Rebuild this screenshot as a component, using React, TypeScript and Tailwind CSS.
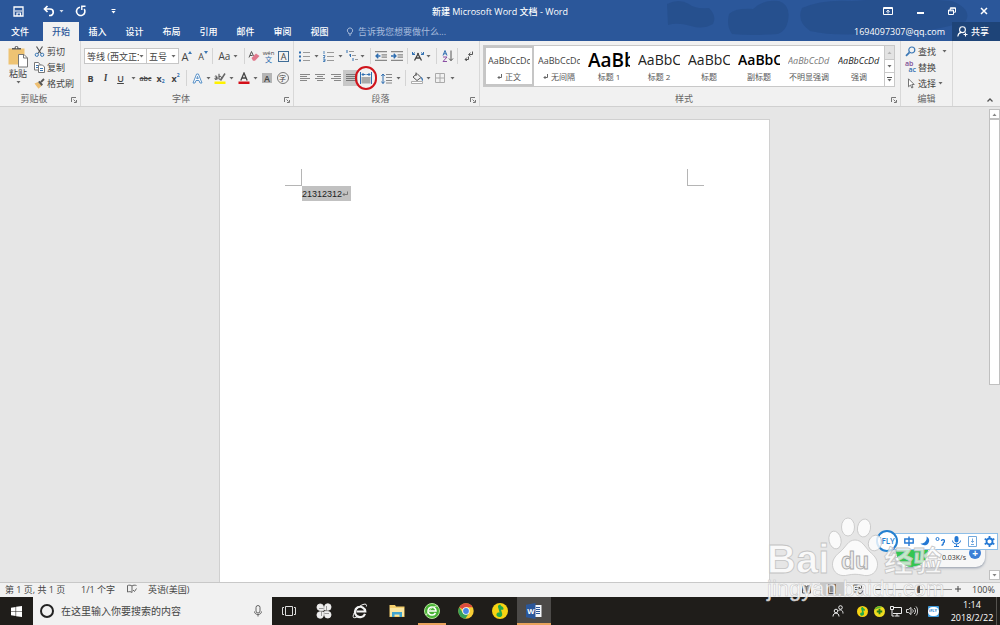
import type { ReactNode } from 'react';
import clsx from 'clsx';

const tabs = ['插入', '设计', '布局', '引用', '邮件', '审阅', '视图'];

const styleCells = [
  { name: '正文', preview: 'AaBbCcDd', mark: true, look: 'text-[9px] text-[#444]' },
  { name: '无间隔', preview: 'AaBbCcDd', mark: true, look: 'text-[9px] text-[#444]' },
  { name: '标题 1', preview: 'AaBb', look: 'text-[19px] font-semibold text-black' },
  { name: '标题 2', preview: 'AaBbC', look: 'text-[14px] text-[#222]' },
  { name: '标题', preview: 'AaBbC', look: 'text-[14px] text-[#222]' },
  { name: '副标题', preview: 'AaBbC', look: 'text-[14px] font-semibold text-black' },
  { name: '不明显强调', preview: 'AaBbCcDd', look: 'text-[9px] italic text-[#777]' },
  { name: '强调', preview: 'AaBbCcDd', look: 'text-[9px] italic text-[#222]' },
];

function Caret({ className }: { className?: string }) {
  return (
    <svg viewBox="0 0 5 3" className={clsx('h-[3px] w-[5px] shrink-0 opacity-80', className)} fill="currentColor" aria-hidden="true">
      <path d="M0.5 0h4L2.5 2.6z" />
    </svg>
  );
}

function Icon({ size = 'size-[14px]', box = 14, children }: { size?: string; box?: number; children: ReactNode }) {
  return (
    <svg viewBox={`0 0 ${box} ${box}`} className={clsx('shrink-0', size)} fill="none" aria-hidden="true">
      {children}
    </svg>
  );
}

function Tool({ label, w, children, className }: { label: string; w: string; children: ReactNode; className?: string }) {
  return (
    <button type="button" aria-label={label} className={clsx('flex h-4 shrink-0 items-center justify-center', w, className)}>
      {children}
    </button>
  );
}

function Drop({ label, w }: { label: string; w: string }) {
  return (
    <Tool label={label} w={w}>
      <Caret />
    </Tool>
  );
}

function Sep({ w }: { w: string }) {
  return (
    <span className={clsx('flex h-4 shrink-0 justify-center', w)}>
      <span className="w-px bg-[#d4d4d4]" />
    </span>
  );
}

function Launcher({ label }: { label: string }) {
  return (
    <button type="button" aria-label={label} className="flex h-[14px] w-3 items-end justify-center pb-[3px]">
      <Icon size="size-[6px]" box={6}>
        <path d="M0.5 5V0.5H5M2.5 2.5l2 2M5.5 3v2.5H3" stroke="#777" />
      </Icon>
    </button>
  );
}

function Group({ title, w, launcher = true, children }: { title: string; w: string; launcher?: boolean; children: ReactNode }) {
  return (
    <section className={clsx('flex flex-col border-r border-[#d8d8d8]', w)} aria-label={title}>
      {children}
      <div className="mt-auto flex text-[#666]">
        <span className="flex-1 text-center leading-[14px]">{title}</span>
        {launcher && <Launcher label={`${title}设置`} />}
      </div>
    </section>
  );
}

function TitleBar() {
  return (
    <div className="flex h-[22px] items-center">
      <div className="flex flex-1 items-center">
        <Tool label="保存" w="w-[17px]" className="ml-[10px]">
          <Icon size="size-[11px]" box={11}>
            <path d="M1 1h9v9H1z" stroke="#fff" strokeWidth="1.3" />
            <path d="M2 5h7M4 10V7h3.500v3" stroke="#fff" strokeWidth="1.2" />
          </Icon>
        </Tool>
        <Tool label="撤消" w="w-4" className="ml-[14px]">
          <Icon size="size-3" box={12}>
            <path d="M4.500 1L1.500 4l3 3M2 4h5a3 3 0 0 1 0 6.500H6" stroke="#fff" strokeWidth="1.700" />
          </Icon>
        </Tool>
        <Drop label="撤消列表" w="w-2" />
        <Tool label="重复" w="w-4" className="ml-2">
          <Icon size="size-3" box={12}>
            <path d="M5 2.200A4.200 4.200 0 1 0 9.200 4" stroke="#fff" strokeWidth="1.600" />
            <path d="M10.500 1.200H6.800v3.800" stroke="#fff" strokeWidth="1.400" />
          </Icon>
        </Tool>
        <Tool label="自定义快速访问工具栏" w="w-4" className="ml-4">
          <Icon size="size-[5px]" box={5}>
            <path d="M0.5 0h4v1h-4zM0.5 2h4L2.5 4.5z" fill="#fff" />
          </Icon>
        </Tool>
      </div>
      <h1 className="text-[9px] font-medium">新建 Microsoft Word 文档 - Word</h1>
      <div className="flex flex-1 justify-end">
        <Tool label="功能区显示选项" w="w-8">
          <Icon size="size-[10px]" box={10}>
            <path d="M0.5 1.5h9v7h-9zM0.5 2.5h9M5 7.5V4.5M3.3 5.8L5 4.2l1.7 1.6" stroke="#fff" />
          </Icon>
        </Tool>
        <Tool label="最小化" w="w-8">
          <span className="mt-1 h-[2px] w-[7px] bg-white" />
        </Tool>
        <Tool label="向下还原" w="w-8">
          <Icon size="size-[8px]" box={8}>
            <path d="M0.5 3h5v4.5h-5zM0.5 3.8h5M2.3 3V0.8h5.2v4.4H5.5M2.3 1.3h5.2" stroke="#fff" />
          </Icon>
        </Tool>
        <Tool label="关闭" w="w-8">
          <Icon size="size-[8px]" box={8}>
            <path d="M1 1l6 6M7 1L1 7" stroke="#fff" strokeWidth="1.5" />
          </Icon>
        </Tool>
      </div>
    </div>
  );
}

function TabBar() {
  return (
    <nav className="flex h-[19px] items-stretch font-medium">
      <button type="button" className="w-[43px] pr-[3px]">文件</button>
      <button type="button" className="w-9 bg-[#f1f1f1] text-[#2b579a]">开始</button>
      {tabs.map((tab) => (
        <button key={tab} type="button" className="w-[37px]">{tab}</button>
      ))}
      <label className="ml-[8px] flex min-w-0 flex-1 items-center gap-1 font-normal text-[#a9bddd]">
        <Icon size="h-[11px] w-2" box={10}>
          <path d="M3.5 8V6.8A3.3 3.3 0 1 1 6.5 6.8V8zM3.8 9.5h2.4" stroke="#c3d0e6" />
        </Icon>
        <input className="w-[120px] bg-transparent placeholder:text-[#a9bddd]" placeholder="告诉我您想要做什么..." aria-label="告诉我您想要做什么" />
      </label>
      <a href="#account" className="mr-[7px] flex items-center font-normal">1694097307@qq.com</a>
      <button type="button" className="flex w-12 items-center gap-[3px] bg-[#1e4478] pl-[5px]">
        <Icon size="size-[11px]" box={11}>
          <circle cx="5.5" cy="3.7" r="2.9" stroke="#fff" strokeWidth="1.1" />
          <path d="M0.8 10.5C1 8 2.5 6.8 4.2 6.4M8.5 6.5v4M6.5 8.5h4" stroke="#fff" strokeWidth="1.1" />
        </Icon>
        共享
      </button>
    </nav>
  );
}

function Clipboard() {
  return (
    <Group title="剪贴板" w="w-[81px]">
      <div className="flex pb-px pt-[2px]">
        <button type="button" className="flex w-[34px] flex-col items-center pl-[2px] pt-[2px]">
          <svg viewBox="0 0 20 23" className="h-[23px] w-5" fill="none" aria-hidden="true">
            <path d="M0.5 3.5h16v16h-16z" fill="#eec373" />
            <path d="M4 4.5h9V3h-2.5a2 2 0 0 0-4 0H4z" fill="#5c5c5c" />
            <circle cx="8.5" cy="2.6" r="0.8" fill="#fff" />
            <path d="M10.5 9.5h5.5l3.5 3.5v9h-9z" fill="#fff" stroke="#777" />
            <path d="M15.5 9.5V13h4" stroke="#777" />
          </svg>
          <span className="leading-[11px]">粘贴</span>
          <Caret className="mt-[2px]" />
        </button>
        <div className="flex flex-col">
          <button type="button" className="flex h-4 items-center gap-[2px]">
            <Icon size="size-[11px]" box={11}>
              <path d="M2.5 0.5l4.5 7M8.5 0.5L4 7.5" stroke="#555" strokeWidth="1.2" />
              <circle cx="2.8" cy="8.8" r="1.6" stroke="#3b78b5" />
              <circle cx="8.2" cy="8.8" r="1.6" stroke="#3b78b5" />
            </Icon>
            剪切
          </button>
          <button type="button" className="flex h-4 items-center gap-[2px]">
            <Icon size="size-[11px]" box={11}>
              <path d="M0.5 0.5h4l1.5 2v5.5H0.5z" fill="#fff" stroke="#777" />
              <path d="M4.5 3h4l2 2v5.5h-6z" fill="#fff" stroke="#777" />
              <path d="M2 3.5h2M2 5.5h2M6 6.5h3M6 8.5h3" stroke="#3b78b5" />
            </Icon>
            复制
          </button>
          <button type="button" className="flex h-4 items-center gap-[2px]">
            <Icon size="size-[11px]" box={11}>
              <path d="M0.5 5.5L4 4l3.5 4-3 2.8z" fill="#eebf72" />
              <path d="M4 4l1.8-1.2L9 6.5 7.5 8z" fill="#555" />
              <path d="M7 4l3-3" stroke="#555" strokeWidth="1.8" />
            </Icon>
            格式刷
          </button>
        </div>
      </div>
    </Group>
  );
}

function FontGroup() {
  return (
    <Group title="字体" w="w-[213px]">
      <div className="mt-[7px] flex pl-[3px]">
        <span className="flex h-4 w-[63px] items-center border border-[#c6c6c6] bg-white pl-[2px] pr-[2px]">
          <select aria-label="字体名称" className="min-w-0 flex-1 appearance-none overflow-hidden text-clip">
            <option>等线 (西文正文)</option>
          </select>
          <Caret />
        </span>
        <span className="-ml-px flex h-4 w-[33px] items-center border border-[#c6c6c6] bg-white pl-[2px] pr-[2px]">
          <select aria-label="字号" className="min-w-0 flex-1 appearance-none">
            <option>五号</option>
          </select>
          <Caret />
        </span>
        <Tool label="增大字号" w="w-4">
          <span className="text-[11px]">A</span>
          <span className="mb-2 size-0 border-x-2 border-b-[3px] border-x-transparent border-b-[#3b78b5]" />
        </Tool>
        <Tool label="减小字号" w="w-4">
          <span className="text-[9px]">A</span>
          <span className="mb-2 size-0 border-x-2 border-t-[3px] border-x-transparent border-t-[#3b78b5]" />
        </Tool>
        <Sep w="w-[3px]" />
        <Tool label="更改大小写" w="w-[29px]" className="gap-[3px] text-[10px]">
          Aa
          <Caret />
        </Tool>
        <Sep w="w-[3px]" />
        <Tool label="清除所有格式" w="w-[15px]">
          <Icon size="size-3" box={12}>
            <path d="M1 7.5L3.5 1.5 5.5 6M2 5.5h2.5" stroke="#555" />
            <path d="M3.5 8L8 3.5l3.5 2.5L7 10.8H5z" fill="#e0788c" />
          </Icon>
        </Tool>
        <Tool label="拼音指南" w="w-[15px]" className="flex-col">
          <span className="text-[6px] leading-[6px]">wén</span>
          <span className="text-[7px] leading-[7px] text-[#2f6eb0]">文</span>
        </Tool>
        <Tool label="字符边框" w="w-[15px]">
          <span className="flex size-[11px] items-center justify-center border border-[#3f6d97] text-[9px]">A</span>
        </Tool>
      </div>
      <div className="mt-[6px] flex pl-[2px]">
        <Tool label="加粗" w="w-[15px]" className="font-bold">B</Tool>
        <Tool label="倾斜" w="w-[15px]" className="font-serif italic font-bold">I</Tool>
        <Tool label="下划线" w="w-[15px]" className="font-semibold underline">U</Tool>
        <Drop label="下划线列表" w="w-[10px]" />
        <Tool label="删除线" w="w-[15px]" className="text-[7px] font-semibold line-through">abc</Tool>
        <Tool label="下标" w="w-[15px]" className="font-bold">
          x<span className="mt-[6px] text-[5px] text-[#2f6eb0]">2</span>
        </Tool>
        <Tool label="上标" w="w-[15px]" className="font-bold">
          x<span className="mb-[5px] text-[5px] text-[#2f6eb0]">2</span>
        </Tool>
        <Sep w="w-[7px]" />
        <Tool label="文本效果和版式" w="w-[14px]">
          <Icon size="size-[11px]" box={11}>
            <path d="M1 10L4.6 1h1.8L10 10H8L7 7.5H4L3 10zM4.7 5.6h1.6L5.5 3.4z" fill="#fff" stroke="#5b93c9" />
          </Icon>
        </Tool>
        <Drop label="文本效果列表" w="w-2" />
        <Tool label="突出显示颜色" w="w-4">
          <Icon size="size-3" box={12}>
            <path d="M0.8 4.5c.8-.8 2.2-.6 2.2.5v2.5M3 5.7c-2.5 0-2.6 1.8-1.3 1.8.8 0 1.3-.6 1.3-1M5 1.8v5.5M5 5c.4-1 2.5-1 2.5.8S5.5 8 5 6.8" stroke="#444" />
            <path d="M6.5 8.5l4.5-7" stroke="#666" strokeWidth="1.5" />
            <path d="M0.5 9.5h11V12h-11z" fill="#fff200" />
          </Icon>
        </Tool>
        <Drop label="突出显示颜色列表" w="w-[7px]" />
        <Tool label="字体颜色" w="w-[17px]">
          <Icon size="size-3" box={12}>
            <path d="M2.8 8.5L6 1l3.2 7.5M4 6h4" stroke="#444" strokeWidth="1.3" />
            <path d="M0.5 9.5h11V12h-11z" fill="#d40f18" />
          </Icon>
        </Tool>
        <Drop label="字体颜色列表" w="w-[7px]" />
        <Tool label="字符底纹" w="w-4">
          <span className="flex size-[10px] items-center justify-center bg-[#b5b5b5] font-semibold">A</span>
        </Tool>
        <Tool label="带圈字符" w="w-[15px]">
          <span className="flex size-[12px] items-center justify-center rounded-full border border-[#777] text-[7px]">字</span>
        </Tool>
      </div>
    </Group>
  );
}

function Paragraph() {
  return (
    <Group title="段落" w="w-[186px]">
      <div className="mt-[7px] flex pl-[3px]">
        <Tool label="项目符号" w="w-[15px]">
          <Icon size="size-[11px]" box={11}>
            <path d="M4 1.5h7M4 5.5h7M4 9.5h7" stroke="#999" />
            <path d="M0 0.5h2v2H0zM0 4.5h2v2H0zM0 8.5h2v2H0z" fill="#2f6eb0" />
          </Icon>
        </Tool>
        <Drop label="项目符号列表" w="w-2" />
        <Tool label="编号" w="w-4">
          <Icon size="size-[11px]" box={11}>
            <path d="M4 1.5h7M4 5.5h7M4 9.5h7" stroke="#999" />
            <path d="M1 0v3M0 4.5h2v1L0.5 6.5H2M0 8h2v2.5H0M0.5 9.3H2" stroke="#2f6eb0" strokeWidth="0.8" />
          </Icon>
        </Tool>
        <Drop label="编号列表" w="w-2" />
        <Tool label="多级列表" w="w-[15px]">
          <Icon size="size-3" box={12}>
            <path d="M3 1.5h5M6 5.5h4M9 9.5h3" stroke="#999" />
            <path d="M1 0v3M3 5h2M4.5 4v3M7 8v3" stroke="#2f6eb0" />
          </Icon>
        </Tool>
        <Drop label="多级列表样式" w="w-[7px]" />
        <Sep w="w-2" />
        <Tool label="减少缩进量" w="w-[14px]">
          <Icon size="size-3" box={11}>
            <path d="M0 1.5h11M6 4.5h5M6 6.5h5M0 9.5h11" stroke="#888" />
            <path d="M5 5.5H1M3 3.5l-2 2 2 2" stroke="#2f6eb0" strokeWidth="1.3" />
          </Icon>
        </Tool>
        <Tool label="增加缩进量" w="w-[17px]">
          <Icon size="size-3" box={11}>
            <path d="M0 1.5h11M6 4.5h5M6 6.5h5M0 9.5h11" stroke="#888" />
            <path d="M0 5.5h4M2.5 3.5l2 2-2 2" stroke="#2f6eb0" strokeWidth="1.3" />
          </Icon>
        </Tool>
        <Sep w="w-[5px]" />
        <Tool label="中文版式" w="w-4">
          <Icon size="size-3" box={12}>
            <path d="M2.5 10.5L6.500 3M5.500 3l4 7.500M4 8h4" stroke="#444" strokeWidth="1.3" />
            <path d="M0.5 4.5l2.500-2M0.5 2v2.5h2.5M11.5 4.5L9 2.500M11.5 2v2.5H9" stroke="#2f6eb0" />
          </Icon>
        </Tool>
        <Drop label="中文版式列表" w="w-[5px]" />
        <Sep w="w-[10px]" />
        <Tool label="排序" w="w-[13px]">
          <Icon size="size-3" box={12}>
            <path d="M1 5.5L3 0.5l2 5M1.8 3.8h2.4" stroke="#2f6eb0" />
            <path d="M1 7h4L1 11.5h4" stroke="#8a4fa3" />
            <path d="M9 0.5v10M7 8.5l2 2.2 2-2.2" stroke="#555" />
          </Icon>
        </Tool>
        <Sep w="w-[7px]" />
        <Tool label="显示编辑标记" w="w-4">
          <Icon size="size-[10px]" box={10}>
            <path d="M8.5 0.5v3H5M6.5 1.8L4.5 3.5l2 1.8M4.5 5.5v3H1M3 6.5L1 8.5l2 1.5" stroke="#555" />
          </Icon>
        </Tool>
      </div>
      <div className="mt-[6px] flex pl-[3px]">
        <Tool label="左对齐" w="w-[15px]">
          <Icon size="size-[10px]" box={10}>
            <path d="M0 1.5h10M0 3.5h7M0 5.5h10M0 7.5h7" stroke="#888" />
          </Icon>
        </Tool>
        <Tool label="居中" w="w-4">
          <Icon size="size-[10px]" box={10}>
            <path d="M0 1.5h10M2 3.5h6M0 5.5h10M2 7.5h6" stroke="#888" />
          </Icon>
        </Tool>
        <Tool label="右对齐" w="w-[15px]">
          <Icon size="size-[10px]" box={10}>
            <path d="M0 1.5h10M3 3.5h7M0 5.5h10M3 7.5h7" stroke="#888" />
          </Icon>
        </Tool>
        <Tool label="两端对齐" w="w-[15px]" className="bg-[#c8c8c8]">
          <Icon size="size-[10px]" box={10}>
            <path d="M0 1.5h10M0 3.5h10M0 5.5h10M0 7.5h10" stroke="#777" />
          </Icon>
        </Tool>
        <span className="relative">
          <Tool label="分散对齐" w="w-4">
            <Icon size="size-3" box={12}>
              <path d="M0.5 0v12M11.5 0v12" stroke="#2f6eb0" />
              <path d="M2 2.5h3.5M6.5 2.5H10M3.5 1L2 2.5 3.5 4M8.5 1L10 2.5 8.5 4" stroke="#2f6eb0" />
              <path d="M1.5 5h9v6.5h-9z" fill="#a9a9a9" />
            </Icon>
          </Tool>
          <span className="pointer-events-none absolute -inset-x-[3px] -inset-y-1 rounded-full border-2 border-[#d0141c]" />
        </span>
        <Tool label="行和段落间距" w="w-[17px]" className="ml-1">
          <Icon size="size-[11px]" box={11}>
            <path d="M5 1.5h6M5 4.5h6M5 7.5h6M5 10h6" stroke="#888" />
            <path d="M2 1v9.5M0.3 3L2 1l1.7 2M0.3 8.5l1.7 2 1.7-2" stroke="#2f6eb0" />
          </Icon>
        </Tool>
        <Drop label="行距列表" w="w-[6px]" />
        <Sep w="w-2" />
        <Tool label="底纹" w="w-4">
          <Icon size="size-3" box={12}>
            <path d="M2 5l4-3.5 4 4L6 8.5zM5 4V0.5" stroke="#555" />
            <path d="M10 5.5c1.5 1 1.5 2.5 1 3" stroke="#2f6eb0" strokeWidth="1.3" />
            <path d="M0.5 9.5h11v2h-11z" fill="#fff" stroke="#999" strokeWidth="0.8" />
          </Icon>
        </Tool>
        <Drop label="底纹列表" w="w-[7px]" />
        <Tool label="边框" w="w-4">
          <Icon size="size-[10px]" box={10}>
            <path d="M0.5 0.5h9v9h-9zM5 0.5v9M0.5 5h9" stroke="#aaa" />
          </Icon>
        </Tool>
        <Drop label="边框列表" w="w-2" />
      </div>
    </Group>
  );
}

function StylesGroup() {
  return (
    <Group title="样式" w="min-w-0 flex-1">
      <div className="ml-[3px] mr-[5px] mt-1 flex h-[42px] overflow-hidden border border-[#c8c8c8] bg-white">
        {styleCells.map((cell, i) => (
          <button
            key={cell.name}
            type="button"
            className={clsx('flex w-[50px] shrink-0 flex-col border-2 px-[2px]', i === 0 ? 'border-[#c6c6c6]' : 'border-transparent')}
          >
            <span className={clsx('flex h-6 w-full items-center overflow-hidden whitespace-nowrap', cell.look)}>{cell.preview}</span>
            <span className="flex w-full items-center justify-center gap-[3px] whitespace-nowrap text-[8px] leading-[9px] text-[#555]">
              {cell.mark && (
                <Icon size="size-[5px]" box={5}>
                  <path d="M4.5 0v3.5H1M2.5 2L1 3.5 2.5 5" stroke="#666" />
                </Icon>
              )}
              {cell.name}
            </span>
          </button>
        ))}
        <div className="ml-auto flex w-[11px] flex-col divide-y divide-[#c8c8c8] border-l border-[#c8c8c8]">
          <button type="button" aria-label="上一行" className="flex flex-1 items-center justify-center bg-[#e3e3e3] text-[#aaa]">
            <Caret className="rotate-180" />
          </button>
          <button type="button" aria-label="下一行" className="flex flex-1 items-center justify-center">
            <Caret />
          </button>
          <button type="button" aria-label="其他样式" className="flex flex-1 flex-col items-center justify-center gap-px">
            <span className="h-px w-[5px] bg-[#555]" />
            <Caret />
          </button>
        </div>
      </div>
    </Group>
  );
}

function Editing() {
  return (
    <Group title="编辑" w="w-[52px]" launcher={false}>
      <div className="flex flex-col pl-1 pt-[2px]">
        <button type="button" className="flex h-4 items-center gap-[2px]">
          <Icon size="size-[11px]" box={11}>
            <circle cx="6.8" cy="4" r="3" stroke="#3b78b5" strokeWidth="1.2" />
            <path d="M4.5 6.3L1 9.8" stroke="#3b78b5" strokeWidth="1.8" />
          </Icon>
          查找
          <Caret className="ml-1" />
        </button>
        <button type="button" className="flex h-4 items-center gap-[2px]">
          <span className="flex w-[11px] flex-col text-[7px] font-semibold leading-[6px]">
            <span className="text-left text-[#7d4a94]">ab</span>
            <span className="text-right text-[#2f6eb0]">ac</span>
          </span>
          替换
        </button>
        <button type="button" className="flex h-4 items-center gap-[2px]">
          <Icon size="size-[11px]" box={11}>
            <path d="M3.5 0.8v8l2-1.8 1.3 3 1.2-.6L6.8 6.5h2.4z" fill="#fff" stroke="#666" strokeWidth="0.9" />
          </Icon>
          选择
          <Caret />
        </button>
      </div>
    </Group>
  );
}

function Ribbon() {
  return (
    <div className="flex border-b border-[#d0d0d0] bg-[#f1f1f1] text-[#444]">
      <Clipboard />
      <FontGroup />
      <Paragraph />
      <StylesGroup />
      <Editing />
      <div className="flex w-[47px] items-end justify-end pb-[3px] pr-[7px]">
        <button type="button" aria-label="折叠功能区">
          <Icon size="size-[6px]" box={6}>
            <path d="M0.5 4.5L3 2l2.5 2.5" stroke="#555" strokeWidth="1.3" />
          </Icon>
        </button>
      </div>
    </div>
  );
}

function Workspace() {
  return (
    <main className="flex min-h-0 flex-1 bg-[#e6e6e6]">
      <div className="flex min-w-0 flex-1 justify-center pt-3">
        <article className="flex w-[551px] items-start justify-between border border-b-0 border-[#d0d0d0] bg-white px-[65px] pt-[49px]">
          <div>
            <div className="h-[17px] w-[17px] border-b border-r border-[#b5b5b5]" />
            <p className="ml-[17px] flex h-[15px] items-center bg-[#c1c1c1] pr-[3px] pt-px font-['Liberation_Sans',sans-serif] text-[9px] text-[#222]">
              21312312
              <Icon size="size-[6px]" box={6}>
                <path d="M5.5 0.5v3H1M2.5 2L1 3.5 2.5 5" stroke="#666" strokeWidth="0.8" />
              </Icon>
            </p>
          </div>
          <div className="h-[17px] w-[17px] border-b border-l border-[#b5b5b5]" />
        </article>
      </div>
      <div className="flex w-[11px] flex-col pb-[2px] pt-[2px]">
        <button type="button" aria-label="向上滚动" className="flex h-[10px] items-center justify-center border border-[#c0c0c0] bg-white text-[#666]">
          <Caret className="rotate-180" />
        </button>
        <div className="h-[266px] border border-[#c0c0c0] bg-white" />
        <button type="button" aria-label="向下滚动" className="mt-auto flex h-[10px] items-center justify-center border border-[#c0c0c0] bg-white text-[#666]">
          <Caret />
        </button>
      </div>
    </main>
  );
}

function StatusBar() {
  return (
    <footer className="flex h-[15px] items-center border-t border-[#c8c8c8] bg-[#f1f1f1] pb-[2px] pl-[5px] text-[#444]">
      <span className="w-[76px]">第 1 页, 共 1 页</span>
      <span className="w-[46px]">1/1 个字</span>
      <button type="button" aria-label="校对">
        <Icon size="size-[10px]" box={10}>
          <path d="M5 2v6.5M5 2C4 1 2 1 0.5 1.5v6.5C2 7.5 4 7.5 5 8.5M5 2c1-1 3-1 4.500-.5M6 6l1.5 1.5L9.5 4.5" stroke="#666" />
        </Icon>
      </button>
      <span className="ml-[11px]">英语(美国)</span>
      <div className="ml-auto flex items-center">
        <Tool label="阅读视图" w="w-7">
          <Icon size="size-[9px]" box={9}>
            <path d="M0.5 1h3.5v7H0.5zM5 1h3.5v7H5zM1.5 3h1.5M1.5 5h1.5M6 3h1.5M6 5h1.5" stroke="#555" />
          </Icon>
        </Tool>
        <span className="flex h-[13px] items-center bg-[#c8c8c8]">
          <Tool label="页面视图" w="w-6">
            <Icon size="size-[10px]" box={10}>
              <path d="M1.5 0.5h7v9h-7zM3 3h4M3 5h4M3 7h4" stroke="#555" />
            </Icon>
          </Tool>
        </span>
        <Tool label="Web 版式视图" w="w-7">
          <Icon size="size-[10px]" box={10}>
            <path d="M0.5 1h8v3M0.5 1v7H4M2 3.5h5M2 5.5h2" stroke="#555" />
            <circle cx="7" cy="7" r="2.5" stroke="#555" />
          </Icon>
        </Tool>
        <Tool label="缩小" w="w-3">
          <span className="h-px w-[6px] bg-[#444]" />
        </Tool>
        <input
          type="range"
          aria-label="显示比例"
          min={10}
          max={190}
          defaultValue={100}
          className="h-[10px] w-[68px] appearance-none bg-[linear-gradient(#999,#999)] bg-[length:100%_1px] bg-center bg-no-repeat [&::-webkit-slider-thumb]:h-[8px] [&::-webkit-slider-thumb]:w-[3px] [&::-webkit-slider-thumb]:appearance-none [&::-webkit-slider-thumb]:bg-[#555]"
        />
        <Tool label="放大" w="w-3">
          <Icon size="size-[6px]" box={6}>
            <path d="M3 0v6M0 3h6" stroke="#444" />
          </Icon>
        </Tool>
        <span className="w-9 pl-2">100%</span>
      </div>
    </footer>
  );
}

function MusicNote() {
  return (
    <>
      <circle cx="8" cy="8" r="8" fill="#f7d313" />
      <path d="M8.5 1.5c0 2 3.5 2 3 4.5-.3 1-1.5 1-2.500.7l1.2 4c.8 3-3.2 4.3-5 2.6C3.5 11.5 5 9 7.6 9.6L6 4c-.3-1.5 1-2.5 2.5-2.5z" fill="#22a94d" />
    </>
  );
}

function TaskBar() {
  return (
    <div className="flex h-7 items-stretch bg-[#1f1d1a] text-white">
      <button type="button" aria-label="开始" className="flex w-[33px] items-center justify-center">
        <Icon size="size-[11px]" box={12}>
          <path d="M0 1.8L5 1v4.7H0zM5.6 0.9L12 0v5.7H5.6zM0 6.3h5V11l-5-.8zM5.6 6.3H12V12l-6.4-.9z" fill="#fff" />
        </Icon>
      </button>
      <label className="flex w-[239px] items-center bg-[#f1f1f1] pl-[7px] pr-2 text-[#444]">
        <span className="size-[14px] shrink-0 rounded-full border-2 border-[#222]" />
        <input className="ml-[7px] min-w-0 flex-1 bg-transparent text-[10px] placeholder:text-[#444]" placeholder="在这里输入你要搜索的内容" aria-label="搜索" />
        <Icon size="size-3" box={12}>
          <path d="M4 2.5a2 2 0 0 1 4 0V6a2 2 0 0 1-4 0zM2.5 6.5c0 4 7 4 7 0M6 9.5v2" stroke="#555" strokeWidth="0.9" />
        </Icon>
      </label>
      <button type="button" aria-label="任务视图" className="flex w-[34px] items-center justify-center">
        <Icon size="size-[14px]">
          <path d="M3.5 2.5h7v9h-7zM2 3.5H0.5v7H2M12 3.5h1.5v7H12" stroke="#ddd" />
        </Icon>
      </button>
      <button type="button" aria-label="搜狗" className="flex w-9 items-center justify-center">
        <Icon size="size-4" box={16}>
          <path d="M7.5 7.5H3.8A3.3 3.3 0 1 1 7.5 3.8zM8.5 7V3.8A3.3 3.3 0 1 1 12 7.300zM8.5 8.500h3.7A3.3 3.3 0 1 1 8.500 12.2zM7.5 9v3.200A3.3 3.3 0 1 1 4 8.7z" fill="#eee" stroke="#eee" strokeWidth="0.8" />
          <path d="M3 5.5h4.5M10.5 3v4.5M8.5 10.5H13M5.5 8.5V13" stroke="#777" strokeWidth="0.7" />
        </Icon>
      </button>
      <button type="button" aria-label="浏览器" className="flex w-9 items-center justify-center">
        <Icon size="size-4" box={16}>
          <path d="M13 10.8A5.200 5.200 0 1 1 13.300 8.500H4.5" stroke="#f3f3f3" strokeWidth="2.2" />
          <path d="M1.5 14.5C-.5 12 6 3 11 1.5c3-1 4 0 3.3 2M1.5 14.5c1.5.8 4-.5 5-1.5" stroke="#f3f3f3" />
        </Icon>
      </button>
      <button type="button" aria-label="文件资源管理器" className="flex w-[37px] items-center justify-center">
        <Icon size="size-4" box={16}>
          <path d="M0.5 2h5.5l1 1.5h8.5V14h-15z" fill="#f5cf6d" />
          <path d="M1 5h14v8H1z" fill="#fbe7a2" />
          <path d="M3 14V9h10v5h-2.5v-2.5h-5V14z" fill="#42a5cf" />
        </Icon>
      </button>
      <button type="button" aria-label="360浏览器" className="flex w-[34px] flex-col items-center pt-[6px]">
        <Icon size="size-4" box={16}>
          <circle cx="8" cy="8" r="7.5" fill="#48b335" stroke="#b6e59b" />
          <path d="M11.5 10A4 4 0 1 1 12 8H5" stroke="#fff" strokeWidth="1.6" />
          <path d="M2.5 12C4 7 10 2.5 14 3" stroke="#d9f5c8" />
        </Icon>
        <span className="mt-auto h-[2px] w-7 bg-[#e8a35c]" />
      </button>
      <button type="button" aria-label="Chrome" className="flex w-[34px] items-center justify-center">
        <Icon size="size-4" box={16}>
          <circle cx="8" cy="8" r="7.7" fill="#f7cd35" />
          <path d="M8 8L1.3 4.2A7.7 7.7 0 0 1 14.7 4.2H8z" fill="#dd4b3e" />
          <path d="M8 8l-2.5 3L1.3 4.2a7.7 7.7 0 0 0 6 11.5L11 10z" fill="#37a259" />
          <circle cx="8" cy="8" r="3.7" fill="#fff" />
          <circle cx="8" cy="8" r="2.9" fill="#4a86e4" />
        </Icon>
      </button>
      <button type="button" aria-label="QQ音乐" className="flex w-[34px] items-center justify-center">
        <Icon size="size-4" box={16}>
          <MusicNote />
        </Icon>
      </button>
      <button type="button" aria-label="Word" className="flex w-[34px] flex-col items-center bg-[#4c4a48] pt-[6px]">
        <Icon size="size-4" box={16}>
          <path d="M8 2h7.5v12H8z" fill="#f4f7fb" />
          <path d="M10 4.5h4M10 6.5h4M10 8.5h4M10 10.5h4" stroke="#2b579a" />
          <path d="M0 1.8L9.5 0v16L0 14.2z" fill="#2b579a" />
          <text x="4.8" y="10.8" textAnchor="middle" fontSize="7.5" fontWeight="700" fill="#fff">W</text>
        </Icon>
        <span className="mt-auto h-[2px] w-full bg-[#e8a35c]" />
      </button>
      <div className="ml-auto flex items-center">
        <Tool label="人脉" w="w-[18px]" className="mr-[7px]">
          <Icon size="size-3" box={12}>
            <circle cx="8.5" cy="2.5" r="1.8" stroke="#eee" />
            <circle cx="4" cy="6" r="1.8" stroke="#eee" />
            <path d="M1 11.5c0-4.500 6-4.500 6 0M6.5 5.5c2.5-1.5 4.5 0 4.5 3" stroke="#eee" />
          </Icon>
        </Tool>
        <Tool label="QQ音乐" w="w-[17px]">
          <Icon size="size-[11px]" box={16}>
            <MusicNote />
          </Icon>
        </Tool>
        <Tool label="安全卫士" w="w-[17px]">
          <Icon size="size-[11px]" box={12}>
            <circle cx="6" cy="6" r="6" fill="#f0dc20" />
            <path d="M0.5 4A6 6 0 0 1 9 1z" fill="#58b530" />
            <path d="M6 3v6M3 6h6" stroke="#277c1c" strokeWidth="2" />
          </Icon>
        </Tool>
        <Tool label="网络" w="w-4">
          <Icon size="size-3" box={12}>
            <path d="M3 2.5h8.5v6H3M7 8.5v2.5M4.5 11h5M0.5 1.5h3v3h-3zM2 4.5V11h2" stroke="#eee" />
          </Icon>
        </Tool>
        <Tool label="音量" w="w-4">
          <Icon size="size-3" box={12}>
            <path d="M0.5 4.5h2l2.5-2v7L2.5 7.5h-2zM6.5 4.5c1 1 1 2 0 3M8.2 3c1.7 1.7 1.7 4.3 0 6M10 1.5c2.2 2.5 2.2 6.5 0 9" stroke="#eee" strokeWidth="0.9" />
          </Icon>
        </Tool>
        <Tool label="讯飞输入法" w="w-4" className="ml-[5px]">
          <span className="flex size-[11px] items-center justify-center rounded-[1px] bg-[#3f9bdc]">
            <span className="flex h-[9px] w-[11px] items-center justify-center rounded-full bg-white text-[4px] font-bold text-[#2781cf]">iFLY</span>
          </span>
        </Tool>
        <time className="ml-[7px] w-12 text-center leading-[13px]" dateTime="2018-02-22T01:14">
          1:14
          <br />
          2018/2/22
        </time>
        <span className="h-7 w-1 border-l border-[#55534f]" />
      </div>
    </div>
  );
}

function InputMethodBar() {
  return (
    <div className="absolute bottom-[58px] right-[2px] w-[122px]">
      <div className="relative z-10 flex items-center">
        <span className="z-10 -mr-[9px] flex size-[22px] items-center justify-center rounded-full border-2 border-[#2580d0] bg-white text-[8px] font-semibold text-[#2580d0]">
          iFLY
        </span>
        <div className="flex h-[17px] flex-1 items-center justify-between border border-[#8fbfe8] bg-white pl-[14px] pr-[2px]">
          <Icon size="size-[10px]" box={10}>
            <path d="M0.8 3h8.4v4H0.8zM5 0.5v9.5" stroke="#2478d4" strokeWidth="1.4" />
          </Icon>
          <Icon size="size-[10px]" box={10}>
            <path d="M6.5 0.5c3 1.5 3.5 5 1.5 7.2C6 9.8 2.5 9.7 0.5 7.5 4 7.8 7.5 5 6.5 0.5z" fill="#2478d4" />
          </Icon>
          <Icon size="size-[10px]" box={10}>
            <circle cx="2.5" cy="3" r="1.5" stroke="#2478d4" />
            <path d="M6.5 5a1.5 1.5 0 1 1 2 1.5C8.5 8 8 9 6.5 9.5" stroke="#2478d4" strokeWidth="1.4" />
          </Icon>
          <Icon size="size-[11px]" box={11}>
            <rect x="3.5" y="0" width="4" height="6.5" rx="2" fill="#2478d4" />
            <path d="M1.5 4.5c0 4.5 8 4.5 8 0M5.5 8v2.5M3 10.5h5" stroke="#2478d4" />
          </Icon>
          <Icon size="size-[11px]" box={11}>
            <path d="M1.5 0.5h8v10h-8zM4 8.5h3M5.5 2.5v4M4 5l1.5 1.5L7 5" stroke="#73a9dd" />
          </Icon>
          <Icon size="size-[11px]" box={11}>
            <circle cx="5.5" cy="5.5" r="3" stroke="#2478d4" strokeWidth="1.8" />
            <path d="M5.5 0v2.5M5.5 8.5V11M0.7 2.7l2.2 1.3M8.1 7l2.2 1.3M0.7 8.3L2.9 7M8.1 4l2.2-1.3" stroke="#2478d4" strokeWidth="1.8" />
          </Icon>
        </div>
      </div>
      <div className="-mt-[5px] ml-[20px] mr-[13px] flex h-5 items-center rounded-b-[9px] bg-[#f7f7f7] text-[#333] shadow-sm shadow-gray-400">
        <span className="-mt-3 size-[32px] shrink-0 rounded-full bg-[#35c552]" />
        <span className="ml-auto mr-[3px] text-[7px]">0.03K/s</span>
        <span className="mb-2 mr-1 flex size-3 items-center justify-center rounded-full bg-[#3c7fd6] text-[10px] font-bold text-white">+</span>
      </div>
    </div>
  );
}

function Watermark() {
  return (
    <svg
      viewBox="0 0 190 92"
      className="pointer-events-none absolute bottom-[19px] right-[45px] z-20 h-[92px] w-[190px] font-['Liberation_Sans','Noto_Sans_CJK_SC',sans-serif]"
      role="img"
      aria-label="Baidu 经验"
    >
      <g fill="#fff" fillOpacity="0.8" stroke="#c4c4c4" strokeWidth="0.8">
        <text x="2" y="59" fontSize="40" fontWeight="700">Bai</text>
        <ellipse cx="70" cy="26" rx="6" ry="9" transform="rotate(-12 70 26)" />
        <ellipse cx="83" cy="13" rx="6.5" ry="9" />
        <ellipse cx="99" cy="14" rx="6.5" ry="9" transform="rotate(10 99 14)" />
        <ellipse cx="110" cy="29" rx="6.5" ry="8" transform="rotate(20 110 29)" />
        <path d="M90 26c7 0 10 7 15 12 5 4 9 9 7 16-2 6-8 9-15 7-5-1-9-1-14 0-7 2-13-1-15-7-2-7 2-12 7-16 6-5 8-12 15-12z" />
        <text x="119" y="58" fontSize="29" fontWeight="700" fillOpacity="0.7">经验</text>
      </g>
      <text x="90" y="55" textAnchor="middle" fontSize="23" fontWeight="700" fill="#ececec" stroke="#aaa" strokeWidth="0.9">du</text>
      <text x="2" y="82" fontSize="22" fill="#fff" fillOpacity="0.85" stroke="#c4c4c4" strokeWidth="0.5">jingyan.baidu.com</text>
    </svg>
  );
}

export default function App() {
  return (
    <div className="relative flex h-screen flex-col overflow-hidden font-['Open_Sans','Noto_Sans_CJK_SC',sans-serif] text-[9px] leading-none">
      <header className="relative bg-[#2b579a] text-white">
        <svg viewBox="0 0 340 41" className="absolute right-0 top-0 h-[41px] w-[340px]" fill="#234b87" fillOpacity="0.6" aria-hidden="true">
          <path d="M7 4q12-6 22 0 5 5 20 4 8 8 4 16-10 6-22 2-14-4-23-1z" />
          <path d="M69 14q6-6 24-5 10-10 26-8 12 4 9 20-2 10-10 13-26 2-46 0-6-8-3-20z" />
          <path d="M142 8q20-9 50-7 50-4 100 0 20 8 14 20-40 14-90 12-40 4-66-2-14-10-8-23z" />
        </svg>
        <div className="relative">
          <TitleBar />
          <TabBar />
        </div>
      </header>
      <Ribbon />
      <Workspace />
      <StatusBar />
      <TaskBar />
      <InputMethodBar />
      <Watermark />
    </div>
  );
}
